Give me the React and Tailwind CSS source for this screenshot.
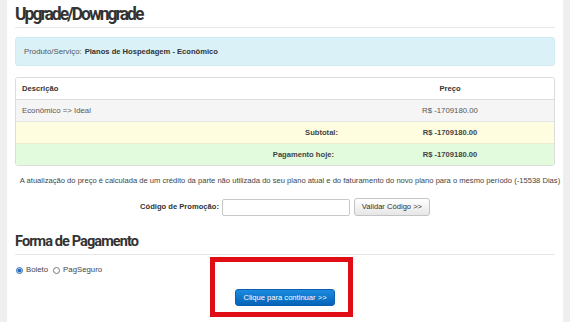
import React, { useState } from 'react';

const App = () => {
    const [payment, setPayment] = useState('boleto');
    const [promo, setPromo] = useState('');

    return (
        <div className="w-[570px] h-[322px] overflow-hidden flex bg-[#efefef] font-['Liberation_Sans',Arial,sans-serif] text-[#333]">
            <div className="w-[7px] shrink-0" />
            <div className="w-[556px] shrink-0 bg-white px-[8px] pt-[2px]">
                <h1 className="font-['Roboto',sans-serif] font-bold text-[17.5px] leading-[24px] tracking-[-2px] text-[#333] pb-[1px] border-b border-[#e8e8e8]">
                    Upgrade/Downgrade
                </h1>

                <div className="mt-[9px] h-[29px] flex items-center px-[8px] bg-[#dbf1f8] border border-[#d0ebf4] rounded-[3px] text-[7.8px]">
                    <span className="text-[#555]">Produto/Serviço:</span>
                    <strong className="ml-[3px] text-[7.6px] font-bold text-[#333]">Planos de Hospedagem - Econômico</strong>
                </div>

                <div className="mt-[11px] border border-[#dcdcdc] rounded-[3px] overflow-hidden text-[7.8px]">
                    <div className="grid grid-cols-[330px_1fr] h-[22px] items-center bg-white border-b border-[#dedede] text-[7.6px]">
                        <div className="pl-[6px] font-bold text-[#333]">Descrição</div>
                        <div className="text-center font-bold text-[#333]">Preço</div>
                    </div>
                    <div className="grid grid-cols-[330px_1fr] h-[22px] items-center bg-[#f5f5f5] border-b border-[#e4e4e4] text-[#555]">
                        <div className="pl-[6px]">Econômico =&gt; Ideal</div>
                        <div className="text-center">R$ -1709180.00</div>
                    </div>
                    <div className="grid grid-cols-[330px_1fr] h-[22px] items-center bg-[#fffde0] border-b border-[#ecead0] font-bold text-[7.6px] text-[#444]">
                        <div className="text-right pr-[8px]">Subtotal:</div>
                        <div className="text-center">R$ -1709180.00</div>
                    </div>
                    <div className="grid grid-cols-[330px_1fr] h-[21px] items-center bg-[#e2fbdc] font-bold text-[7.6px] text-[#444]">
                        <div className="text-right pr-[12px]">Pagamento hoje:</div>
                        <div className="text-center">R$ -1709180.00</div>
                    </div>
                </div>

                <p className="mt-[10px] ml-[2px] -mr-[8px] text-center text-[7.6px] leading-[10px] text-[#444] whitespace-nowrap">
                    A atualização do preço é calculada de um crédito da parte não utilizada do seu plano atual e do faturamento do novo plano para o mesmo período (-15538 Dias)
                </p>

                <div className="mt-[12px] flex items-center justify-center gap-[3px] text-[7.8px]">
                    <span className="font-bold text-[7.6px] text-[#333]">Código de Promoção:</span>
                    <input
                        value={promo}
                        onChange={e => setPromo(e.target.value)}
                        className="w-[128px] h-[17px] border border-[#c8c8c8] rounded-[2px] bg-white outline-none px-1"
                    />
                    <button className="ml-[1px] w-[76px] h-[18px] border border-[#c4c4c4] rounded-[3px] bg-gradient-to-b from-white to-[#e6e6e6] text-[#333] text-[7.6px]">
                        Validar Código &gt;&gt;
                    </button>
                </div>

                <h2 className="mt-[17px] font-['Roboto',sans-serif] font-bold text-[14.5px] leading-[18px] tracking-[-0.9px] text-[#333] pb-[3px] border-b border-[#e8e8e8]">
                    Forma de Pagamento
                </h2>

                <div className="flex items-start">
                    <div className="w-[195px] shrink-0 pt-[15px] pl-[1px] flex items-center h-[10px] text-[7.8px] text-[#444]">
                        <label className="flex items-center gap-[3px] cursor-pointer">
                            <input type="radio" name="pay" checked={payment === 'boleto'} onChange={() => setPayment('boleto')} className="w-[7px] h-[7px] m-0 accent-[#2a6ebb]" />
                            Boleto
                        </label>
                        <label className="ml-[5px] flex items-center gap-[3px] cursor-pointer">
                            <input type="radio" name="pay" checked={payment === 'pagseguro'} onChange={() => setPayment('pagseguro')} className="w-[7px] h-[7px] m-0" />
                            PagSeguro
                        </label>
                    </div>
                    <div className="mt-[2px] w-[143px] h-[60px] border-[5px] border-[#e00d14] pl-[20px] pt-[21px]">
                        <button className="w-[100px] h-[17px] rounded-[3px] bg-gradient-to-b from-[#1b8ce0] to-[#0563b8] border border-[#0b5fae] text-white text-[7.6px]">
                            Clique para continuar &gt;&gt;
                        </button>
                    </div>
                </div>
            </div>
            <div className="w-[7px] shrink-0" />
        </div>
    );
};

export default App;
